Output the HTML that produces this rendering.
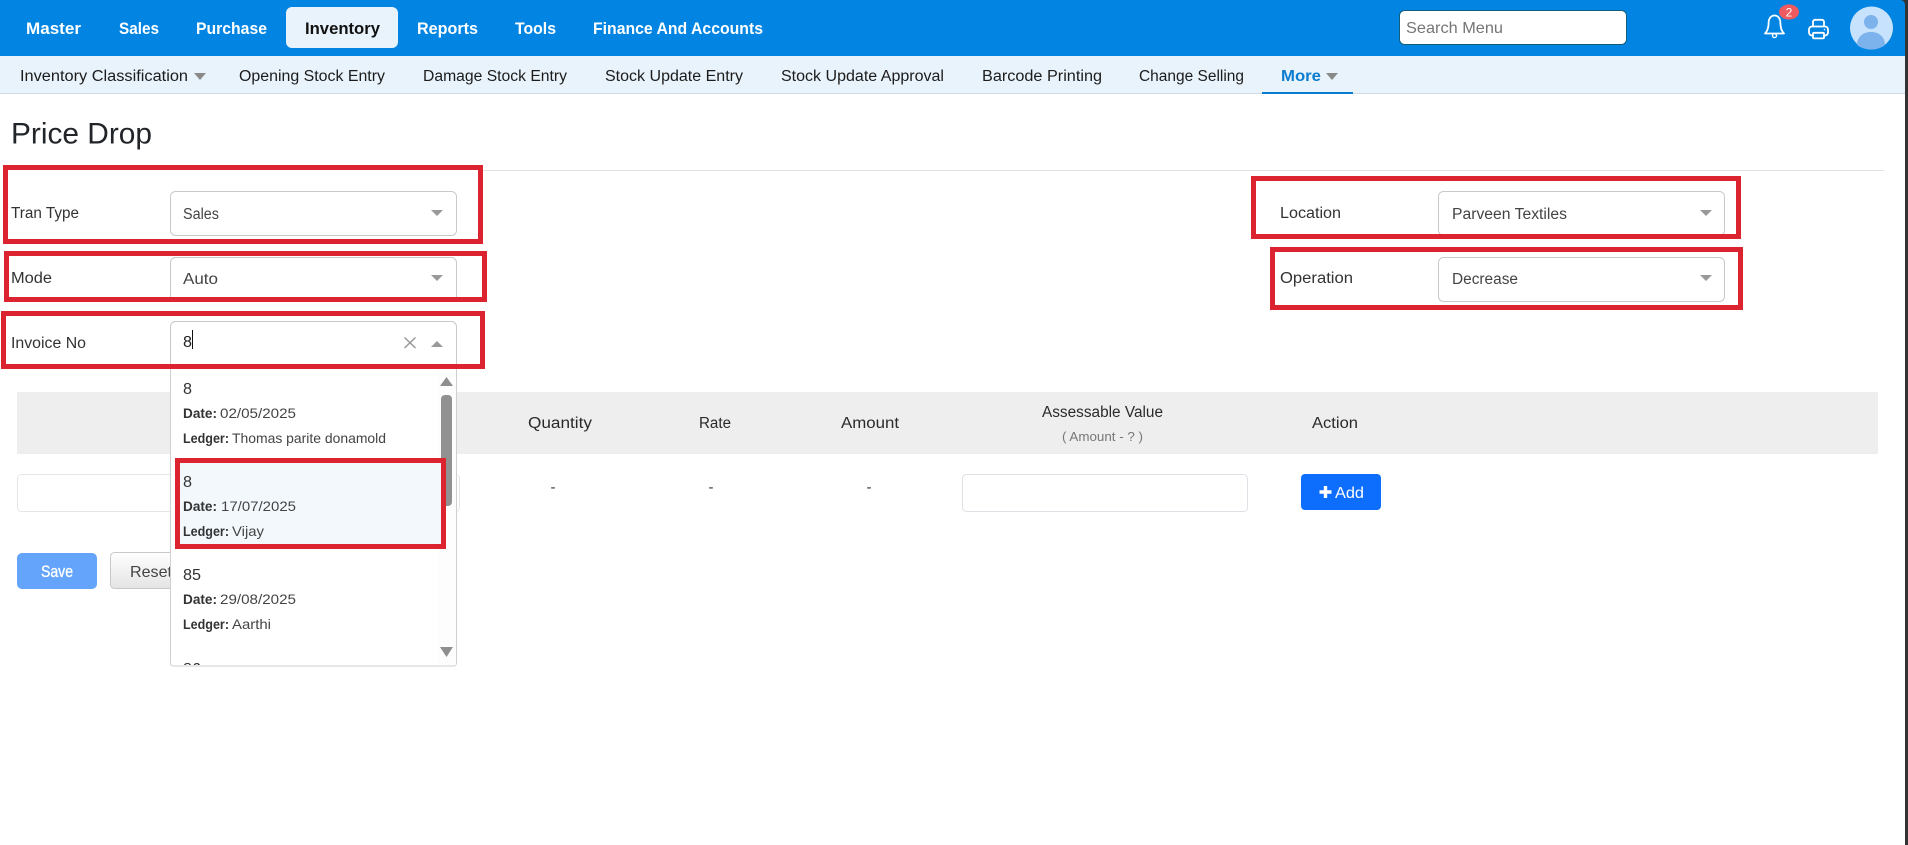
<!DOCTYPE html>
<html lang="en">
<head>
<meta charset="utf-8">
<title>Price Drop</title>
<style>
html,body{margin:0;padding:0;width:1908px;height:845px;overflow:hidden;background:#fff}
svg{display:block;position:absolute;left:0;top:0}
text{font-family:"Liberation Sans",sans-serif;font-size:15.5px;fill:#222;white-space:pre}
.nav{font-size:17px;font-weight:700;fill:#fff}
.sub{font-size:15.5px;fill:#1c1c1c}
.lab{font-size:15.5px;fill:#333}
.val{font-size:15.5px;fill:#444}
.num{font-size:15.5px;fill:#333}
.b{font-size:14px;font-weight:700;fill:#333}
.v{font-size:14px;fill:#444}
.th{font-size:15.5px;fill:#2a2a2a}
.red{fill:none;stroke:#dc2430;stroke-width:5}
.sel{fill:#fff;stroke:#c9c9c9;stroke-width:1}
.tri{fill:#999}
</style>
</head>
<body>
<svg width="1908" height="845" viewBox="0 0 1908 845" xmlns="http://www.w3.org/2000/svg">
  <defs>
    <linearGradient id="rg" x1="0" y1="0" x2="0" y2="1"><stop offset="0" stop-color="#fff"/><stop offset="1" stop-color="#e4e4e4"/></linearGradient>
    <clipPath id="dd"><rect x="171" y="367" width="285" height="298"/></clipPath>
  </defs>
  <rect width="1908" height="845" fill="#fff"/>

  <!-- top bar -->
  <rect x="0" y="0" width="1905" height="56" fill="#0284e3"/>
  <rect x="286" y="7" width="112" height="41" rx="6" fill="#e9f3fb"/>
  <text class="nav" x="26" y="34" textLength="55" lengthAdjust="spacingAndGlyphs">Master</text>
  <text class="nav" x="119" y="34" textLength="40" lengthAdjust="spacingAndGlyphs">Sales</text>
  <text class="nav" x="196" y="34" textLength="71" lengthAdjust="spacingAndGlyphs">Purchase</text>
  <text class="nav" style="fill:#111" x="305" y="34" textLength="75" lengthAdjust="spacingAndGlyphs">Inventory</text>
  <text class="nav" x="417" y="34" textLength="61" lengthAdjust="spacingAndGlyphs">Reports</text>
  <text class="nav" x="515" y="34" textLength="41" lengthAdjust="spacingAndGlyphs">Tools</text>
  <text class="nav" x="593" y="34" textLength="170" lengthAdjust="spacingAndGlyphs">Finance And Accounts</text>

  <!-- search -->
  <rect x="1399.5" y="10.5" width="227" height="34" rx="5" fill="#fff" stroke="#0f5f7a"/>
  <text x="1406" y="33" style="font-size:16px;fill:#757575" textLength="97" lengthAdjust="spacingAndGlyphs">Search Menu</text>

  <!-- bell -->
  <path d="M1765 33.5C1768 30.5 1768.6 27 1768.6 23C1768.6 18.5 1771 15.5 1774.5 15.5C1778 15.5 1780.4 18.5 1780.4 23C1780.4 27 1781 30.5 1784 33.5Z" fill="none" stroke="#fff" stroke-width="1.8" stroke-linejoin="round"/>
  <circle cx="1774.5" cy="35.6" r="2" fill="none" stroke="#fff" stroke-width="1.4"/>
  <ellipse cx="1789" cy="12" rx="10" ry="7.6" fill="#ee5a5f"/>
  <text x="1789" y="16.5" text-anchor="middle" style="font-size:12px;fill:#fff">2</text>

  <!-- printer -->
  <path d="M1813 27V22C1813 20.5 1814 19.8 1815 19.8H1822C1823 19.8 1824 20.5 1824 22V27" fill="none" stroke="#fff" stroke-width="1.8"/>
  <rect x="1809" y="26.5" width="19" height="9" rx="3" fill="none" stroke="#fff" stroke-width="1.8"/>
  <rect x="1813" y="32.8" width="11" height="5.6" rx="1" fill="#0284e3" stroke="#fff" stroke-width="1.8"/>
  <circle cx="1824.5" cy="29.6" r=".7" fill="#fff"/>

  <!-- avatar -->
  <circle cx="1871.5" cy="28" r="21.5" fill="#c7e2fc"/>
  <circle cx="1871" cy="22" r="7" fill="#7db3ec"/>
  <path d="M1857 45C1857 37 1863 32 1871 32C1879 32 1885 37 1885 45C1881 48 1876 49.5 1871.5 49.5C1866 49.5 1861 48 1857 45Z" fill="#7db3ec"/>

  <!-- sub nav -->
  <rect x="0" y="56" width="1905" height="37" fill="#e9f3fb"/>
  <rect x="0" y="93" width="1905" height="1" fill="#cfdce3"/>
  <text class="sub" x="20" y="81" textLength="168" lengthAdjust="spacingAndGlyphs">Inventory Classification</text>
  <path d="M194 73H206L200 80Z" fill="#8a8a8a"/>
  <text class="sub" x="239" y="81" textLength="146" lengthAdjust="spacingAndGlyphs">Opening Stock Entry</text>
  <text class="sub" x="423" y="81" textLength="144" lengthAdjust="spacingAndGlyphs">Damage Stock Entry</text>
  <text class="sub" x="605" y="81" textLength="138" lengthAdjust="spacingAndGlyphs">Stock Update Entry</text>
  <text class="sub" x="781" y="81" textLength="163" lengthAdjust="spacingAndGlyphs">Stock Update Approval</text>
  <text class="sub" x="982" y="81" textLength="120" lengthAdjust="spacingAndGlyphs">Barcode Printing</text>
  <text class="sub" x="1139" y="81" textLength="105" lengthAdjust="spacingAndGlyphs">Change Selling</text>
  <text class="sub" style="fill:#0b7bd0;font-weight:700" x="1281" y="81" textLength="40" lengthAdjust="spacingAndGlyphs">More</text>
  <path d="M1326 73H1338L1332 80Z" fill="#8a8a8a"/>
  <rect x="1262" y="92" width="91" height="2" fill="#0b7bd0"/>

  <!-- heading -->
  <text x="11" y="143.500" style="font-size:30px;fill:#212529" textLength="141" lengthAdjust="spacingAndGlyphs">Price Drop</text>
  <rect x="483" y="170" width="1401" height="1" fill="#e2e2e2"/>

  <!-- table header -->
  <rect x="17" y="392" width="1861" height="62" fill="#eeeeee"/>
  <text class="th" x="528" y="428" textLength="64" lengthAdjust="spacingAndGlyphs">Quantity</text>
  <text class="th" x="699" y="428" textLength="32" lengthAdjust="spacingAndGlyphs">Rate</text>
  <text class="th" x="841" y="428" textLength="58" lengthAdjust="spacingAndGlyphs">Amount</text>
  <text class="th" x="1042" y="417" textLength="121" lengthAdjust="spacingAndGlyphs">Assessable Value</text>
  <text x="1062" y="441" style="font-size:13px;fill:#777" textLength="81" lengthAdjust="spacingAndGlyphs">( Amount - ? )</text>
  <text class="th" x="1312" y="428" textLength="46" lengthAdjust="spacingAndGlyphs">Action</text>

  <!-- row -->
  <rect x="17.5" y="474.5" width="442" height="37" rx="4" fill="#fff" stroke="#e3e6e9"/>
  <text x="553" y="492" text-anchor="middle" style="font-size:15px;fill:#333">-</text>
  <text x="711" y="492" text-anchor="middle" style="font-size:15px;fill:#333">-</text>
  <text x="869" y="492" text-anchor="middle" style="font-size:15px;fill:#333">-</text>
  <rect x="962.5" y="474.5" width="285" height="37" rx="4" fill="#fff" stroke="#dee2e6"/>
  <rect x="1301" y="474" width="80" height="36" rx="4" fill="#0d6efd"/>
  <path d="M1325.5 486V498M1319.5 492H1331.5" stroke="#fff" stroke-width="3.4" fill="none"/>
  <text x="1335" y="498" style="font-size:15.5px;fill:#fff" textLength="29" lengthAdjust="spacingAndGlyphs">Add</text>

  <!-- buttons -->
  <rect x="17" y="553" width="80" height="36" rx="5" fill="#64a5fb"/>
  <text x="41" y="577" style="font-size:16.5px;fill:#fff;stroke:#fff;stroke-width:.35" textLength="32" lengthAdjust="spacingAndGlyphs">Save</text>
  <rect x="110.5" y="552.5" width="90" height="36" rx="4" fill="url(#rg)" stroke="#c8c8c8"/>
  <text x="130" y="577" style="font-size:16px;fill:#444" textLength="42" lengthAdjust="spacingAndGlyphs">Reset</text>

  <!-- selects -->
  <rect class="sel" x="170.5" y="191.5" width="286" height="44" rx="5"/>
  <text class="val" x="183" y="219" textLength="36" lengthAdjust="spacingAndGlyphs">Sales</text>
  <path class="tri" d="M431 210H443L437 216Z"/>
  <text class="lab" x="11" y="218" textLength="68" lengthAdjust="spacingAndGlyphs">Tran Type</text>

  <rect class="sel" x="170.5" y="257.5" width="286" height="44" rx="5"/>
  <text class="val" x="183" y="284" textLength="35" lengthAdjust="spacingAndGlyphs">Auto</text>
  <path class="tri" d="M431 275H443L437 281Z"/>
  <text class="lab" x="11" y="283" textLength="41" lengthAdjust="spacingAndGlyphs">Mode</text>

  <rect class="sel" x="170.5" y="321.5" width="286" height="60" rx="5"/>
  <text x="183" y="347" style="font-size:16px;fill:#222" textLength="9" lengthAdjust="spacingAndGlyphs">8</text>
  <rect x="192" y="330" width="1" height="19" fill="#111"/>
  <path d="M404.5 337.5L415.500 348M415.500 337.5L404.5 348" stroke="#999" stroke-width="1.5" fill="none"/>
  <path class="tri" d="M437 341L443 347H431Z"/>
  <text class="lab" x="11" y="348" textLength="75" lengthAdjust="spacingAndGlyphs">Invoice No</text>

  <rect class="sel" x="1438.5" y="191.5" width="286" height="44" rx="5"/>
  <text class="val" x="1452" y="219" textLength="115" lengthAdjust="spacingAndGlyphs">Parveen Textiles</text>
  <path class="tri" d="M1700 210H1712L1706 216Z"/>
  <text class="lab" x="1280" y="218" textLength="61" lengthAdjust="spacingAndGlyphs">Location</text>

  <rect class="sel" x="1438.5" y="257.5" width="286" height="44" rx="5"/>
  <text class="val" x="1452" y="284" textLength="66" lengthAdjust="spacingAndGlyphs">Decrease</text>
  <path class="tri" d="M1700 275H1712L1706 281Z"/>
  <text class="lab" x="1280" y="283" textLength="73" lengthAdjust="spacingAndGlyphs">Operation</text>

  <!-- dropdown -->
  <rect x="170.5" y="366" width="286" height="300" rx="3" fill="#fff" stroke="#cfcfcf"/>
  <g clip-path="url(#dd)">
    <rect x="437" y="367" width="19" height="298" fill="#fdfdfd"/>
    <rect x="180" y="463" width="261" height="81" fill="#f3f8fd"/>

    <text class="num" x="183" y="394" style="font-size:16px" textLength="9" lengthAdjust="spacingAndGlyphs">8</text>
    <text class="b" x="183" y="418" textLength="34" lengthAdjust="spacingAndGlyphs">Date:</text>
    <text class="v" x="220" y="418" textLength="76" lengthAdjust="spacingAndGlyphs">02/05/2025</text>
    <text class="b" x="183" y="443" textLength="46" lengthAdjust="spacingAndGlyphs">Ledger:</text>
    <text class="v" x="232" y="443" textLength="154" lengthAdjust="spacingAndGlyphs">Thomas parite donamold</text>

    <text class="num" x="183" y="487" style="font-size:16px" textLength="9" lengthAdjust="spacingAndGlyphs">8</text>
    <text class="b" x="183" y="511" textLength="34" lengthAdjust="spacingAndGlyphs">Date:</text>
    <text class="v" x="221" y="511" textLength="75" lengthAdjust="spacingAndGlyphs">17/07/2025</text>
    <text class="b" x="183" y="536" textLength="46" lengthAdjust="spacingAndGlyphs">Ledger:</text>
    <text class="v" x="232" y="536" textLength="32" lengthAdjust="spacingAndGlyphs">Vijay</text>

    <text class="num" x="183" y="580" style="font-size:16px" textLength="18" lengthAdjust="spacingAndGlyphs">85</text>
    <text class="b" x="183" y="604" textLength="34" lengthAdjust="spacingAndGlyphs">Date:</text>
    <text class="v" x="220" y="604" textLength="76" lengthAdjust="spacingAndGlyphs">29/08/2025</text>
    <text class="b" x="183" y="629" textLength="46" lengthAdjust="spacingAndGlyphs">Ledger:</text>
    <text class="v" x="232" y="629" textLength="39" lengthAdjust="spacingAndGlyphs">Aarthi</text>

    <text class="num" x="183" y="674" style="font-size:16px" textLength="18" lengthAdjust="spacingAndGlyphs">86</text>

    <path d="M446.5 377L453 386H440Z" fill="#8f8f8f"/>
    <rect x="441" y="395" width="11" height="111" rx="4" fill="#919191"/>
    <path d="M446.5 657L440 647H453Z" fill="#8f8f8f"/>
  </g>

  <!-- highlight boxes -->
  <rect class="red" x="5.5" y="167.5" width="475" height="74"/>
  <rect class="red" x="6.5" y="253.5" width="478" height="46"/>
  <rect class="red" x="3.5" y="313.5" width="479" height="53"/>
  <rect class="red" x="1253.5" y="178.5" width="485" height="58"/>
  <rect class="red" x="1272.5" y="249.5" width="468" height="58"/>
  <rect class="red" x="177.5" y="460.5" width="266" height="86"/>

  <!-- window edge -->
  <rect x="1905" y="0" width="3" height="845" fill="#333"/>
  <path d="M1900 0H1905V5C1905 2 1903 0 1900 0Z" fill="#333"/>
</svg>
</body>
</html>
